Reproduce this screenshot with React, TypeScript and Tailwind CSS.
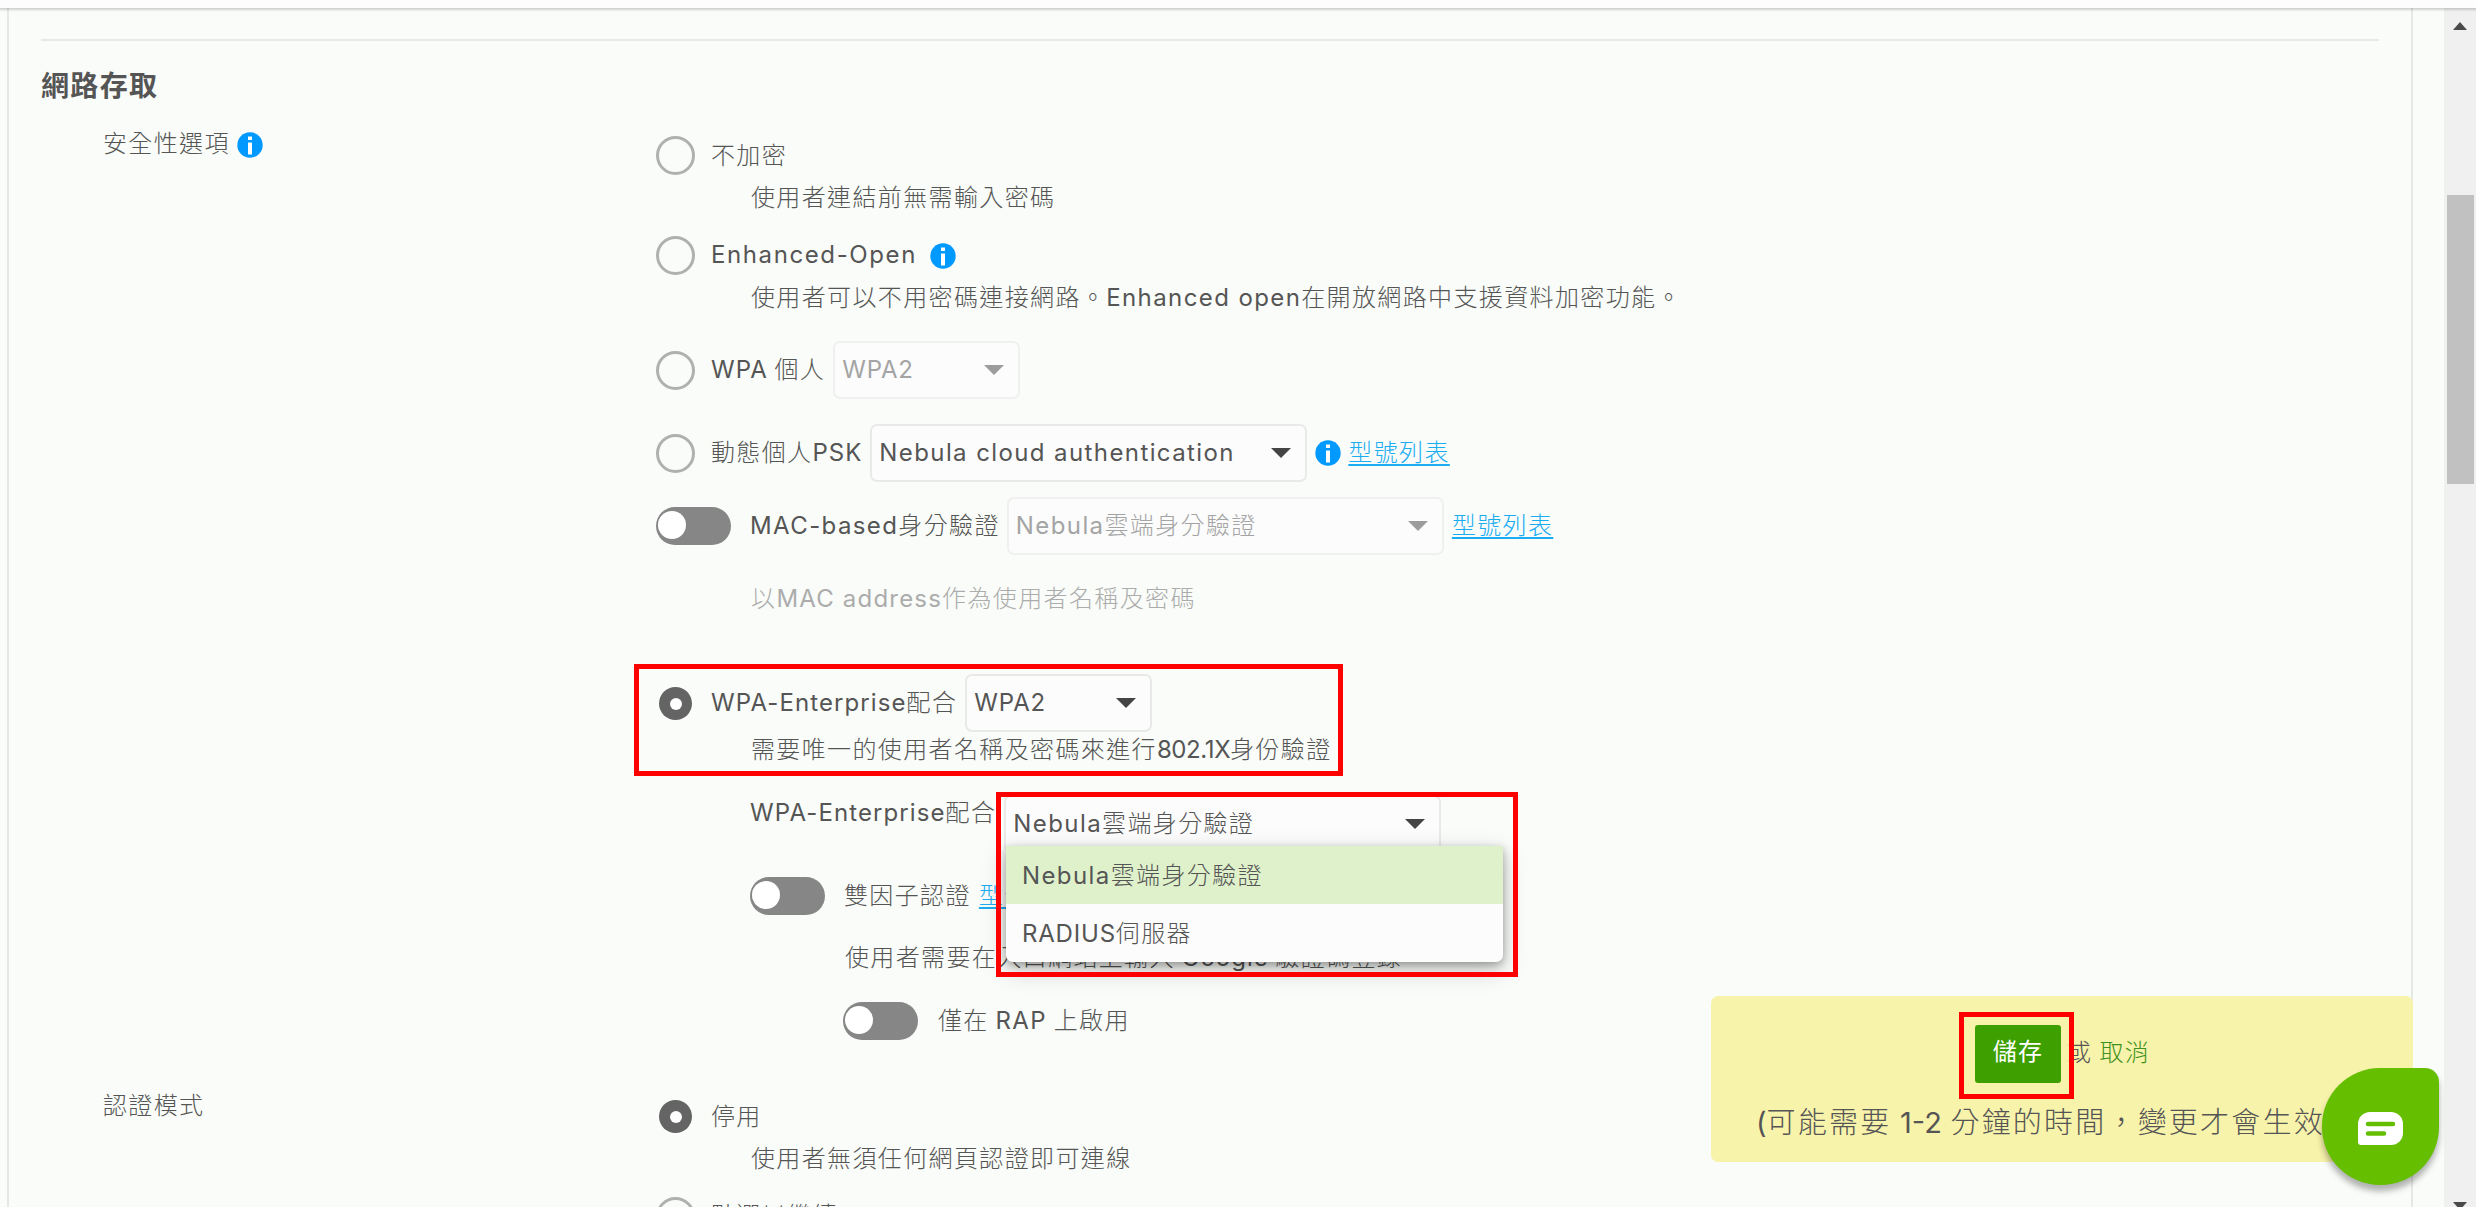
import type { ReactNode } from 'react';

// Latin runs are set a bit heavier and wider than the Chinese text around them.
function En({ children, className = 'tracking-[1.4px]' }: { children: string; className?: string }) {
  return <span className={`font-[Inter] font-normal ${className}`}>{children}</span>;
}

function Caret({ className = 'text-[#444]' }: { className?: string }) {
  return (
    <svg viewBox="0 0 20 10" className={`w-5 h-2.5 shrink-0 fill-current ${className}`}>
      <path d="M0 0h20L10 10z" />
    </svg>
  );
}

function InfoIcon({ className = '' }: { className?: string }) {
  return (
    <svg viewBox="0 0 26 26" className={`w-[26px] h-[26px] shrink-0 ${className}`}>
      <circle cx="13" cy="13" r="12.7" fill="#0099ff" />
      <path d="M11 4.500h4v3.500h-4zM11 10.500h4v12h-4z" fill="#fff" />
    </svg>
  );
}

function Radio({ checked = false }: { checked?: boolean }) {
  return (
    <span className="w-[39px] h-[39px] mt-px shrink-0 flex items-center justify-center mr-4">
      {checked ? (
        <span className="w-[33px] h-[33px] rounded-full bg-[#646464] flex items-center justify-center">
          <span className="w-3 h-3 rounded-full bg-[#fdfdfd]" />
        </span>
      ) : (
        <span className="w-[39px] h-[39px] rounded-full border-3 border-[#b0b0b0]" />
      )}
    </span>
  );
}

function Toggle() {
  return (
    <span className="w-[75px] h-[38px] shrink-0 rounded-full bg-[#868686] flex items-center pl-0.5 pb-0.5 mr-[19px]">
      <span className="w-7 h-7 rounded-full bg-white" />
    </span>
  );
}

function Select({ children, disabled = false, className }: { children: ReactNode; disabled?: boolean; className: string }) {
  return (
    <div
      className={`h-[58px] shrink-0 flex items-center justify-between rounded-[7px] border-2 bg-[#fcfcfc] pl-[7px] pr-3.5 ${
        disabled ? 'border-[#f0f1ef] text-[#a4a4a4]' : 'border-[#e9eae8]'
      } ${className}`}
    >
      <span className="pb-0.5">{children}</span>
      <Caret className={disabled ? 'text-[#9c9c9c]' : 'text-[#444]'} />
    </div>
  );
}

function ModelLink({ className = '' }: { className?: string }) {
  return (
    <a className={`pb-1 text-[#1cacf2] underline decoration-2 underline-offset-[3px] ${className}`}>型號列表</a>
  );
}

function Row({ children, className = '' }: { children: ReactNode; className?: string }) {
  return <div className={`flex items-center whitespace-nowrap ${className}`}>{children}</div>;
}

function Hint({ children, className = 'pl-[95px]' }: { children: ReactNode; className?: string }) {
  return <p className={`h-10 leading-[37px] whitespace-nowrap ${className}`}>{children}</p>;
}

function ScrollBar() {
  return (
    <div className="w-8 shrink-0 bg-[#f0f0f0] flex flex-col items-center">
      <svg viewBox="0 0 14 8" className="mt-3.5 w-3.5 h-2 shrink-0">
        <path d="M7 0l7 8H0z" fill="#4a4a4a" />
      </svg>
      <div className="mt-[165px] w-[27px] h-[289px] shrink-0 bg-[#c1c1c1]" />
      <svg viewBox="0 0 14 8" className="mt-auto -mb-[3px] w-3.5 h-2 shrink-0">
        <path d="M0 0h14L7 8z" fill="#4a4a4a" />
      </svg>
    </div>
  );
}

function SaveBar() {
  return (
    <div className="absolute left-[1711px] top-[996px] w-[702px] h-[166px] rounded-[7px] bg-[#f8f3aa]">
      <div className="flex items-center pt-[29px] pl-[264px]">
        <button className="w-[86px] h-[58px] rounded-[3px] bg-[#3d9f00] text-white font-normal pb-2">儲存</button>
        <span className="ml-1.5 pb-1.5">或</span>
        <a className="ml-[7px] pb-1.5 text-[#3d9120]">取消</a>
      </div>
      <p className="pl-[45px] mt-[15px] leading-[44px] whitespace-nowrap text-[29px] tracking-[2.2px]">
        <En className="tracking-normal">(</En>可能需要 <En className="tracking-normal">1-2</En> 分鐘的時間，變更才會生效
      </p>
    </div>
  );
}

function ChatButton() {
  return (
    <button className="absolute left-[2322px] top-[1068px] w-[117px] h-[117px] rounded-[58px] rounded-tr-[14px] bg-[#65be00] shadow-[0_6px_6px_rgba(0,0,0,0.3)] flex items-center justify-center pt-1">
      <svg viewBox="0 0 45 33" className="w-[45px] h-[33px]">
        <path d="M12 0h21a12 12 0 0 1 12 12v9a12 12 0 0 1-12 12H3a3 3 0 0 1-3-3V12A12 12 0 0 1 12 0z" fill="#fff" />
        <path d="M10 12h25M10 21.500h16" stroke="#65be00" strokeWidth="4.500" strokeLinecap="round" />
      </svg>
    </button>
  );
}

export default function App() {
  return (
    <div
      lang="zh-TW"
      className="relative w-[2476px] h-[1207px] overflow-hidden flex flex-col bg-[#f9fcf8] font-['Noto_Sans_CJK_TC',sans-serif] text-2xl font-light tracking-[1.37px] text-[#555]"
    >
      <div className="h-2 shrink-0 bg-[#fdfdfd] shadow-[0_1px_2px_1px_rgba(0,0,0,0.17)] z-10" />
      <div className="flex-1 min-h-0 flex">
        <main className="ml-[7px] w-[2406px] mr-[31px] border-x-2 border-[#e6e8e5] pl-8">
          <hr className="mt-[31px] w-[2338px] border-t-2 border-[#e7e9e6]" />
          <h2 className="mt-[21px] h-11 leading-[44px] text-[28px] font-bold">網路存取</h2>

          <section className="flex mt-[29px]">
            <div className="w-[615px] pl-[62px] flex items-start gap-[7px]">
              <span className="h-9 leading-9 -mt-[11px]">安全性選項</span>
              <InfoIcon className="-mt-[3px]" />
            </div>
            <div>
              <Row className="h-10"><Radio /><span className="pb-[3px]">不加密</span></Row>
              <Hint className="mt-0.5 pl-[95px]">使用者連結前無需輸入密碼</Hint>
              <Row className="mt-[18px] h-10">
                <Radio /><En className="tracking-[1.6px]">Enhanced-Open</En><InfoIcon className="ml-[13px] mt-px" />
              </Row>
              <Hint className="mt-0.5 pl-[95px]">
                使用者可以不用密碼連接網路。<En>Enhanced open</En>在開放網路中支援資料加密功能。
              </Hint>
              <Row className="mt-6 h-[58px]">
                <Radio /><span className="pb-0.5"><En className="tracking-[1px]">WPA</En> 個人</span>
                <Select disabled className="w-[187px] ml-2"><En className="tracking-[0.8px]">WPA2</En></Select>
              </Row>
              <Row className="mt-[25px] h-[58px]">
                <Radio /><span className="pb-0.5">動態個人<En className="tracking-[1px]">PSK</En></span>
                <Select className="w-[437px] ml-2"><En>Nebula cloud authentication</En></Select>
                <InfoIcon className="ml-2" />
                <ModelLink className="ml-[7px]" />
              </Row>
              <Row className="mt-[15px] h-[58px]">
                <Toggle /><span className="pb-0.5"><En>MAC-based</En>身分驗證</span>
                <Select disabled className="w-[437px] ml-[7px]"><En>Nebula</En>雲端身分驗證</Select>
                <ModelLink className="ml-2" />
              </Row>
              <Hint className="mt-[23px] pl-[95px] text-[#acacac]">以<En className="tracking-[1.2px]">MAC address</En>作為使用者名稱及密碼</Hint>

              <Row className="mt-14 h-[58px]">
                <Radio checked /><span className="pb-0.5"><En className="tracking-[1.1px]">WPA-Enterprise</En>配合</span>
                <Select className="w-[187px] ml-2"><En className="tracking-[0.8px]">WPA2</En></Select>
              </Row>
              <Hint className="-mt-[3px] pl-[95px]">
                需要唯一的使用者名稱及密碼來進行<En className="tracking-[-0.4px]">802.1X</En>身份驗證
              </Hint>
              <div className="relative mt-[26px] h-[58px] flex items-center pl-[94px] whitespace-nowrap">
                <span className="pb-[25px]"><En className="tracking-[1.1px]">WPA-Enterprise</En>配合</span>
                <Select className="w-[437px] ml-2"><En>Nebula</En>雲端身分驗證</Select>
                <ul className="absolute z-10 left-[350px] top-[51px] w-[497px] rounded-b-[7px] bg-[#fcfcfc] shadow-[0_8px_24px_rgba(0,0,0,0.22),0_3px_8px_rgba(0,0,0,0.28)]">
                  <li className="h-[58px] leading-[55px] pl-4 bg-[#dff1cb]"><En>Nebula</En>雲端身分驗證</li>
                  <li className="h-[58px] leading-[55px] pl-4"><En className="tracking-[0.8px]">RADIUS</En>伺服器</li>
                </ul>
              </div>
              <Row className="mt-6 h-[38px] pl-[94px]">
                <Toggle /><span className="pb-1">雙因子認證</span><ModelLink className="ml-2" />
              </Row>
              <Hint className="mt-[22px] pl-[189px]">
                使用者需要在入口網站上輸入 <En className="tracking-[1px]">Google</En> 驗證碼登錄
              </Hint>
              <Row className="mt-[25px] h-[38px] pl-[187px]">
                <Toggle /><span className="pb-0.5 pl-px">僅在 <En>RAP</En> 上啟用</span>
              </Row>
            </div>
          </section>

          <section className="flex mt-[56px]">
            <div className="w-[615px] pl-[62px]">
              <span className="block h-9 leading-9 -mt-2.5">認證模式</span>
            </div>
            <div>
              <Row className="h-10"><Radio checked /><span className="pb-0.5">停用</span></Row>
              <Hint className="mt-0.5 pl-[95px]">使用者無須任何網頁認證即可連線</Hint>
              <Row className="mt-[18px] h-10"><Radio /><span className="pb-1">點選以繼續</span></Row>
            </div>
          </section>
        </main>
        <ScrollBar />
      </div>

      <SaveBar />
      <ChatButton />

      {/* callouts */}
      <div className="absolute z-20 left-[634px] top-[664px] w-[709px] h-[112px] border-[5px] border-[#f00]" />
      <div className="absolute z-20 left-[996px] top-[792px] w-[522px] h-[185px] border-[5px] border-[#f00]" />
      <div className="absolute z-20 left-[1959px] top-[1012px] w-[115px] h-[87px] border-[5px] border-[#f00]" />
    </div>
  );
}
